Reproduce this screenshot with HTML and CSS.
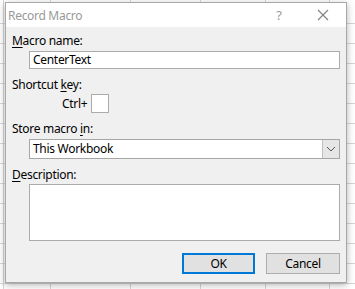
FILE: index.html
```html
<!DOCTYPE html>
<html>
<head>
    <meta charset="UTF-8">
    <title>Record Macro</title>
    <link rel="stylesheet" href="styles.css">
</head>
<body>
    <div class="dialog">
        <div class="titlebar">
            <span class="title">Record Macro</span>
            <span class="help">?</span>
            <span class="close">
                <svg viewBox="0 0 12 12" width="12" height="12">
                    <path d="M1 1 L11 11 M11 1 L1 11" stroke="#808080" stroke-width="1.1" fill="none"/>
                </svg>
            </span>
        </div>

        <div class="content">
            <div class="label"><u>M</u>acro name:</div>
            <div class="field text-input">CenterText</div>

            <div class="label">Shortcut <u>k</u>ey:</div>
            <div class="shortcut">
                <span>Ctrl+</span>
                <span class="keybox"></span>
            </div>

            <div class="label">Store macro <u>i</u>n:</div>
            <div class="field select">
                <span class="value">This Workbook</span>
                <span class="arrow">
                    <svg viewBox="0 0 10 6" width="10" height="6">
                        <path d="M1 1 L5 5 L9 1" stroke="#555" stroke-width="1" fill="none"/>
                    </svg>
                </span>
            </div>

            <div class="label"><u>D</u>escription:</div>
            <div class="field textarea"></div>

            <div class="buttons">
                <button class="btn btn-default">OK</button>
                <button class="btn">Cancel</button>
            </div>
        </div>
    </div>
</body>
</html>
```

FILE: styles.css
```css
* {
    margin: 0;
    padding: 0;
    box-sizing: border-box;
}

body {
    width: 355px;
    height: 289px;
    overflow: hidden;
    font-family: "Noto Sans", "Open Sans", sans-serif;
    font-size: 12px;
    letter-spacing: -0.3px;
    color: #000;
    background-color: #fff;
    /* spreadsheet grid behind the dialog */
    background-image:
        linear-gradient(#d6d6d6, #d6d6d6),
        linear-gradient(#d6d6d6, #d6d6d6),
        linear-gradient(#d6d6d6, #d6d6d6),
        linear-gradient(#d6d6d6, #d6d6d6),
        linear-gradient(#d6d6d6, #d6d6d6),
        linear-gradient(#d6d6d6, #d6d6d6),
        repeating-linear-gradient(to bottom, transparent 0, transparent 19px, #d6d6d6 19px, #d6d6d6 20px);
    background-size: 1px 100%, 1px 100%, 1px 100%, 1px 100%, 1px 100%, 1px 100%, 100% 100%;
    background-position: 3px 0, 50px 0, 130px 0, 200px 0, 265px 0, 329px 0, 0 4px;
    background-repeat: no-repeat, no-repeat, no-repeat, no-repeat, no-repeat, no-repeat, repeat;
    padding: 2px 0 0 5px;
}

/* Dialog window */
.dialog {
    width: 342px;
    background: #f0f0f0;
    border: 1px solid #a8a8a8;
    box-shadow: 0 2px 7px rgba(0, 0, 0, 0.3);
}

.titlebar {
    display: flex;
    align-items: center;
    height: 24px;
    background: #fff;
}

.title {
    flex: 1;
    padding-left: 2px;
    color: #999;
    font-size: 12px;
}

.help {
    width: 42px;
    text-align: center;
    color: #999;
    font-size: 13px;
}

.close {
    width: 46px;
    display: flex;
    justify-content: center;
    align-items: center;
}

.close svg {
    display: block;
}

.content {
    padding: 6px 6px 8px 6px;
}

.label {
    line-height: 16px;
    margin-top: 8px;
}

.label:first-child {
    margin-top: 0;
}

.label u {
    text-underline-offset: 2px;
}

.field {
    margin-left: 17px;
    background: #fff;
    border: 1px solid #ababab;
}

.text-input {
    margin-top: 2px;
    height: 18px;
    line-height: 16px;
    padding-left: 3px;
}

.shortcut {
    display: flex;
    align-items: center;
    gap: 4px;
    margin-top: 1px;
    margin-left: 50px;
}

.keybox {
    width: 18px;
    height: 19px;
    background: #fff;
    border: 1px solid #ababab;
}

.select {
    display: flex;
    margin-top: 2px;
    height: 20px;
    border-color: #a6a6a6;
}

.select .value {
    flex: 1;
    line-height: 18px;
    padding-left: 3px;
}

.select .arrow {
    width: 17px;
    display: flex;
    align-items: center;
    justify-content: center;
    background: #e6e6e6;
    border-left: 1px solid #c0c0c0;
}

.textarea {
    margin-top: 1px;
    height: 57px;
}

.buttons {
    display: flex;
    justify-content: flex-end;
    gap: 11px;
    margin-top: 12px;
}

.btn {
    width: 74px;
    height: 21px;
    font-family: inherit;
    font-size: 12px;
    letter-spacing: -0.3px;
    color: #000;
    background: #e1e1e1;
    border: 1px solid #adadad;
}

.btn-default {
    width: 73px;
    border: 2px solid #0078d7;
}
```
